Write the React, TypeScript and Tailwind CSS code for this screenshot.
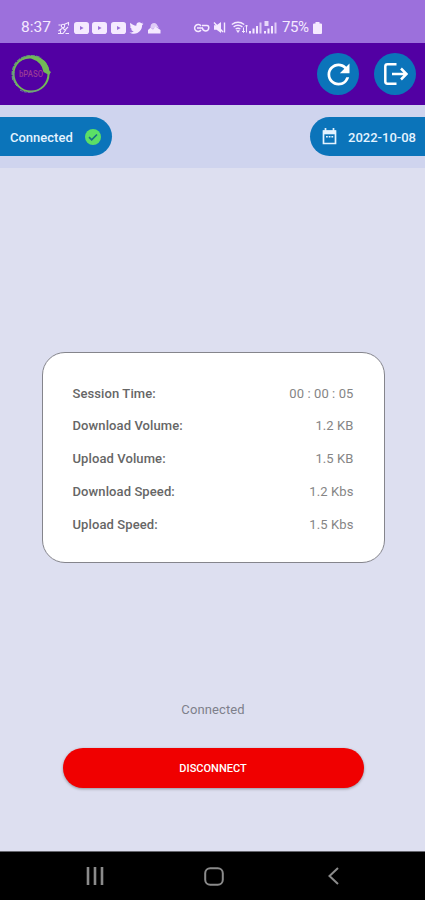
import React from 'react';
import { MdRefresh } from 'react-icons/md';
import { FaTwitter } from 'react-icons/fa';

const VideoIcon: React.FC = () => (
  <svg viewBox="0 0 15 12" className="w-[15px] h-[12px] shrink-0">
    <rect width="15" height="12" rx="2.8" fill="currentColor" />
    <path d="M6 4v4l3.6-2z" fill="#9c70dc" />
  </svg>
);

const RunnerIcon: React.FC = () => (
  <svg viewBox="0 0 13 14" className="w-[13px] h-[14px] shrink-0" fill="none" stroke="currentColor" strokeWidth="1.1">
    <circle cx="6" cy="5" r="1.7" />
    <path d="M1.5 4h2.3M7 3.5 11.5 1.5v3M5 7.5 1.5 10M5.5 7l3 2.3L6 12.5H1M8.5 8.5 11 6M8.5 12.5H12M3.5 9.5v2.5" />
  </svg>
);

const PhotoIcon: React.FC = () => (
  <svg viewBox="0 0 13 12" className="w-[13px] h-[12px] shrink-0" fill="currentColor">
    <path d="M0 11.5V8l2.5-2.2L5 7.5l2.5-3L12.5 8v3.5z" />
    <path d="M2.5 6V4.500a3.500 3.500 0 0 1 6-2.500L11 6 8 5 5 7z" opacity=".75" />
  </svg>
);

const KeyIcon: React.FC = () => (
  <svg viewBox="0 0 17 12" className="w-[17px] h-[12px] shrink-0" fill="none" stroke="currentColor" strokeWidth="1.5">
    <path d="M8 4A3.5 3.5 0 1 0 8 8M4 6h6" />
    <path d="M9 3.5h5q1.8 0 1.8 2.3Q15.5 9 12.5 9 9.5 8.5 9.5 6" />
  </svg>
);

const MuteIcon: React.FC = () => (
  <svg viewBox="0 0 13 13" className="w-[13px] h-[13px] shrink-0">
    <path d="M1 4.3h2.6L8 1v11L3.6 8.7H1z" fill="currentColor" />
    <path d="m1 1.5 9 9.5M11.5 1.5v10" stroke="currentColor" strokeWidth="1.4" />
  </svg>
);

const WifiIcon: React.FC = () => (
  <svg viewBox="0 0 17 13" className="w-[17px] h-[13px] shrink-0" fill="none" stroke="currentColor" strokeWidth="1.4">
    <path d="M.8 3.5Q7-1 13.2 3.5M2.6 5.8q4.4-3 8.8 0M4.6 8q2.4-1.5 4.8 0" />
    <path d="m5 9.2 2 2.8 2-2.8z" fill="currentColor" stroke="none" />
    <path d="M12.5 6.5v5M15.5 4v7.5M14 5.5 15.5 4 17 5.5M11 10l1.5 1.5L14 10" strokeWidth="1" />
  </svg>
);

const SignalIcon: React.FC<{ badge?: boolean }> = ({ badge }) => (
  <svg viewBox="0 0 13 13" className="w-[13px] h-[13px] shrink-0" fill="currentColor">
    <path d="M0 10h2v2.5H0zM3.5 7.5h2v5h-2zM7 5h2v7.5H7z" />
    <path d="M10.5 1.5h2v11h-2z" opacity=".75" />
    {badge && <path d="M.5 0h4v5h-4z" opacity=".85" />}
  </svg>
);

const BatteryIcon: React.FC = () => (
  <svg viewBox="0 0 9 12" className="w-[9px] h-[12px] shrink-0" fill="currentColor">
    <path d="M2.5 0h4v1.5H8q1 0 1 1V11q0 1-1 1H1q-1 0-1-1V2.5q0-1 1-1h1.5z" />
  </svg>
);

const Logo: React.FC = () => (
  <svg viewBox="0 0 44 44" className="w-11 h-11" fill="none">
    <circle cx="22" cy="22" r="17.5" stroke="#72b957" strokeWidth="2" />
    <path d="M4 28Q1 14 11 7q10-6 21-1" stroke="#669b78" strokeWidth="1.5" strokeDasharray="4 1" />
    <path d="M7 13Q18-1 32 6.5q7 3.5 8.500 12.5l1.500 1-2 3-5.500-3Q33 10 22 6.500 13 6 7 13z" fill="#72b957" />
    <path d="M5 20q-2 10 4 15M11 38q9 5 20-1" stroke="#7090a0" strokeWidth="1" strokeDasharray="3 1" />
    <text x="22" y="25" textAnchor="middle" textLength="24" lengthAdjust="spacingAndGlyphs" fill="#983a96" fontSize="8.5" fontWeight="500">bPASO</text>
  </svg>
);

const LogoutIcon: React.FC = () => (
  <svg viewBox="0 0 24 22" className="w-6 h-[22px] translate-x-px" fill="none" stroke="currentColor" strokeWidth="2.5">
    <path d="M12.5 1.3h-9Q1.3 1.3 1.3 3.5v15q0 2.2 2.2 2.2h9M8 11h14.500M17 5.500l5.500 5.500-5.500 5.500" />
  </svg>
);

const CalendarIcon: React.FC = () => (
  <svg viewBox="0 0 15 17" className="w-[15px] h-[17px]">
    <path d="M1.5 3h12v12.5h-12zM3.5 0v3M11.5 0v3" fill="none" stroke="currentColor" strokeWidth="1.7" />
    <path d="M1 2.5h13v3.8H1z" fill="currentColor" />
    <path d="M4 8.8h1.8M6.7 8.8h1.8M9.4 8.8h1.8" stroke="currentColor" strokeWidth="1.6" />
  </svg>
);

const App: React.FC = () => {
  const stats = [
    { label: 'Session Time:', value: '00 : 00 : 05' },
    { label: 'Download Volume:', value: '1.2 KB' },
    { label: 'Upload Volume:', value: '1.5 KB' },
    { label: 'Download Speed:', value: '1.2 Kbs' },
    { label: 'Upload Speed:', value: '1.5 Kbs' }
  ];

  return (
    <div className="w-[425px] h-[900px] flex flex-col overflow-hidden bg-[#dddff0] font-['Roboto',sans-serif]">
      <div className="h-[43px] shrink-0 bg-[#9c70dc] text-[#f5eaff] flex items-center pt-[12px] pl-[21px]">
        <span className="w-[36px] text-[15.5px] leading-none">8:37</span>
        <div className="w-[136px] flex items-center gap-[3.5px]">
          <RunnerIcon />
          <VideoIcon />
          <VideoIcon />
          <VideoIcon />
          <FaTwitter className="w-[15px] h-[14px] shrink-0" />
          <PhotoIcon />
        </div>
        <div className="flex items-center">
          <KeyIcon />
          <div className="flex items-center ml-[3px] gap-[5px]">
            <MuteIcon />
            <WifiIcon />
          </div>
          <div className="flex items-center ml-[1px] gap-[2px]">
            <SignalIcon />
            <SignalIcon badge />
          </div>
          <span className="w-[31px] ml-[5px] text-[15px] leading-none tracking-[-0.4px]">75%</span>
          <BatteryIcon />
        </div>
      </div>

      <header className="h-[62px] shrink-0 bg-[#5200a3] text-white flex items-center justify-between pl-[9px] pr-[9px]">
        <Logo />
        <div className="flex gap-[15px]">
          <button className="w-[42px] h-[42px] rounded-full bg-[#0b74ba] flex items-center justify-center">
            <MdRefresh className="w-[33px] h-[33px]" />
          </button>
          <button className="w-[42px] h-[42px] rounded-full bg-[#0b74ba] flex items-center justify-center">
            <LogoutIcon />
          </button>
        </div>
      </header>

      <div className="h-[63px] shrink-0 bg-[#cfd4ee] flex items-center justify-between text-[13px] font-medium text-[#e4f3ff]">
        <div className="w-[112px] h-[39px] rounded-r-full bg-[#0b74ba] flex items-center justify-between pl-[10px] pr-[11px]">
          <span className="pt-[2px]">Connected</span>
          <svg viewBox="0 0 16 16" className="w-4 h-4">
            <circle cx="8" cy="8" r="8" fill="#5bdf66" />
            <path d="m4 8.2 2.7 2.7L12 5.5" fill="none" stroke="#176f87" strokeWidth="1.7" />
          </svg>
        </div>
        <div className="w-[115px] h-[39px] rounded-l-full bg-[#0b74ba] flex items-center justify-between pl-[12px] pr-[9px]">
          <CalendarIcon />
          <span className="pt-[2px]">2022-10-08</span>
        </div>
      </div>

      <main className="flex-1 flex flex-col items-center pt-[184px] pl-px">
        <div className="w-[343px] h-[211px] rounded-[23px] border border-[#85858c] bg-white pt-[24px] px-[30px] text-[13px] text-[#666]">
          {stats.map((stat) => (
            <div key={stat.label} className="h-[32.75px] flex items-center justify-between">
              <span className="font-medium tracking-[0.1px]">{stat.label}</span>
              <span className="text-[#858585] tracking-[0.1px]">{stat.value}</span>
            </div>
          ))}
        </div>
        <p className="mt-[137px] text-[13px] leading-5 text-[#7d7f8b] tracking-[0.1px]">Connected</p>
        <button className="mt-[28px] pt-[3px] w-[301px] h-[40px] rounded-full bg-[#f00000] text-white text-[11px] font-medium shadow-[0_1px_3px_rgba(0,0,0,0.35)]">
          DISCONNECT
        </button>
      </main>

      <nav className="h-[49px] shrink-0 bg-black border-t border-[#66676e] flex items-center text-[#8b8b8b] pl-[86px]">
        <svg viewBox="0 0 18 18" className="w-[18px] h-[18px]" stroke="currentColor" strokeWidth="2.6">
          <path d="M2 0v18M9 0v18M16 0v18" />
        </svg>
        <svg viewBox="0 0 20 19" className="w-5 h-[19px] ml-[100px]" fill="none" stroke="currentColor" strokeWidth="2">
          <rect x="1.2" y="1.2" width="17.6" height="16.6" rx="5" />
        </svg>
        <svg viewBox="0 0 11 18" className="w-[11px] h-[18px] ml-[104px]" fill="none" stroke="currentColor" strokeWidth="2">
          <path d="M10 1 1.5 9l8.5 8" />
        </svg>
      </nav>
    </div>
  );
};

export default App;
